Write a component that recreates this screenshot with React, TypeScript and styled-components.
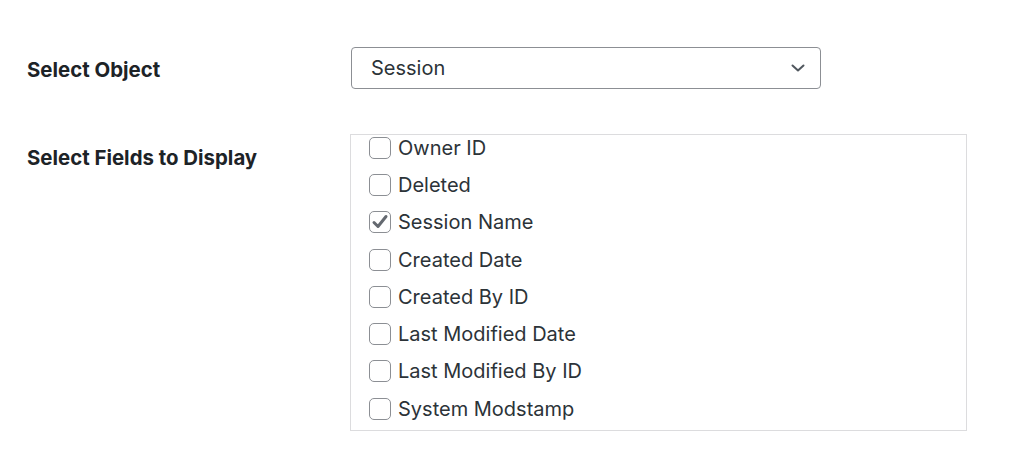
import styled, { createGlobalStyle } from 'styled-components'

const fields = [
  { label: 'Owner ID', checked: false },
  { label: 'Deleted', checked: false },
  { label: 'Session Name', checked: true },
  { label: 'Created Date', checked: false },
  { label: 'Created By ID', checked: false },
  { label: 'Last Modified Date', checked: false },
  { label: 'Last Modified By ID', checked: false },
  { label: 'System Modstamp', checked: false },
]

const App = () => {
  return (
    <>
      <GlobalStyle />
      <FormTable>
        <Label>Select Object</Label>
        <SelectBox>
          <span>Session</span>
          <svg width='18' height='18' viewBox='0 0 18 18' fill='none'>
            <path d='M3.5 6.5 L9 11.5 L14.5 6.5' stroke='#50575e' strokeWidth='2' strokeLinecap='round' strokeLinejoin='round' />
          </svg>
        </SelectBox>

        <Label $top>Select Fields to Display</Label>
        <FieldBox>
          <FieldList>
            {fields.map((field) => (
              <FieldRow key={field.label}>
                <CheckBox>
                  {field.checked ? (
                    <svg width='20' height='20' viewBox='0 0 20 20' fill='none'>
                      <path d='M4 10.5 L8 14.5 L16 4.5' stroke='#646970' strokeWidth='3' strokeLinecap='round' strokeLinejoin='round' />
                    </svg>
                  ) : null}
                </CheckBox>
                {field.label}
              </FieldRow>
            ))}
          </FieldList>
        </FieldBox>
      </FormTable>
    </>
  )
}
export default App

const GlobalStyle = createGlobalStyle`
  body {
    margin: 0;
    background: #ffffff;
    font-family: Inter, 'Noto Sans', 'Liberation Sans', sans-serif;
  }
`
const FormTable = styled.div`
  display: grid;
  grid-template-columns: 324px auto;
  row-gap: 45px;
  align-items: center;
  padding: 47px 0 0 27px;
`
const Label = styled.div<{ $top?: boolean }>`
  font-size: 20.4px;
  font-weight: 700;
  color: #1d2327;
  line-height: 24px;
  align-self: ${(p) => (p.$top ? 'start' : 'center')};
  padding-top: ${(p) => (p.$top ? '12px' : '4px')};
`
const SelectBox = styled.div`
  width: 470px;
  height: 42px;
  box-sizing: border-box;
  border: 1px solid #8c8f94;
  border-radius: 4px;
  display: flex;
  align-items: center;
  justify-content: space-between;
  padding: 0 13px 0 19px;
  font-size: 20px;
  color: #2c3338;
`
const FieldBox = styled.div`
  width: 617px;
  height: 297px;
  box-sizing: border-box;
  border: 1px solid #dcdcde;
  margin-left: -1px;
  overflow: hidden;
`
const FieldList = styled.div`
  display: flex;
  flex-direction: column;
  margin-top: -6px;
  padding-left: 18px;
`
const FieldRow = styled.label`
  height: 37.3px;
  display: flex;
  align-items: center;
  gap: 7px;
  font-size: 20px;
  color: #2c3338;
`
const CheckBox = styled.span`
  width: 22px;
  height: 22px;
  box-sizing: border-box;
  border: 1px solid #8c8f94;
  border-radius: 5px;
  display: flex;
  align-items: center;
  justify-content: center;
  flex-shrink: 0;
`
